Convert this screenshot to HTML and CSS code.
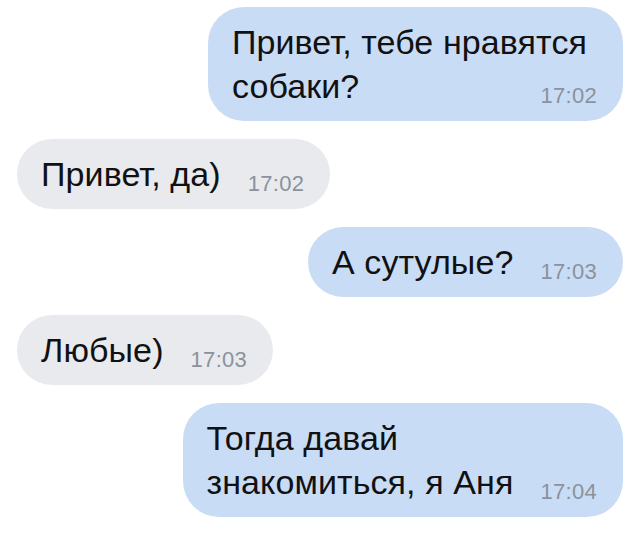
FILE: index.html
```html
<!DOCTYPE html>
<html lang="ru">
<head>
    <meta charset="UTF-8">
    <title>Диалог</title>
    <link rel="stylesheet" href="styles.css">
</head>
<body>
    <div class="chat">
        <div class="msg out">
            <div class="line">Привет, тебе нравятся</div>
            <div class="last">
                <span class="text">собаки?</span>
                <span class="time">17:02</span>
            </div>
        </div>
        <div class="msg in">
            <div class="last">
                <span class="text">Привет, да)</span>
                <span class="time">17:02</span>
            </div>
        </div>
        <div class="msg out">
            <div class="last">
                <span class="text">А сутулые?</span>
                <span class="time">17:03</span>
            </div>
        </div>
        <div class="msg in">
            <div class="last">
                <span class="text">Любые)</span>
                <span class="time">17:03</span>
            </div>
        </div>
        <div class="msg out">
            <div class="line">Тогда давай</div>
            <div class="last">
                <span class="text">знакомиться, я Аня</span>
                <span class="time">17:04</span>
            </div>
        </div>
    </div>
</body>
</html>
```

FILE: styles.css
```css
body {
    margin: 0;
    background: #fff;
    font-family: "Liberation Sans", Arial, sans-serif;
    color: #111;
}
.chat {
    display: flex;
    flex-direction: column;
    gap: 18px;
    padding: 7px 17px;
}
.msg {
    display: flex;
    flex-direction: column;
    padding: 13px 26px 13px 24px;
    border-radius: 36px;
    font-size: 34px;
    line-height: 44px;
    letter-spacing: 0.1px;
}
.msg.out {
    align-self: flex-end;
    background: #c9dcf5;
}
.msg.in {
    align-self: flex-start;
    background: #e8eaee;
}
/* wrapped lines keep a bit more room on the right than the time does */
.line {
    padding-right: 10px;
}
/* last line of a message: text on the left, time pushed to the right */
.last {
    display: flex;
    align-items: flex-end;
    justify-content: space-between;
    gap: 27px;
}
.time {
    margin-bottom: 1px;
    font-size: 22px;
    line-height: 22px;
    letter-spacing: 0.3px;
    color: #8b929b;
}
```
